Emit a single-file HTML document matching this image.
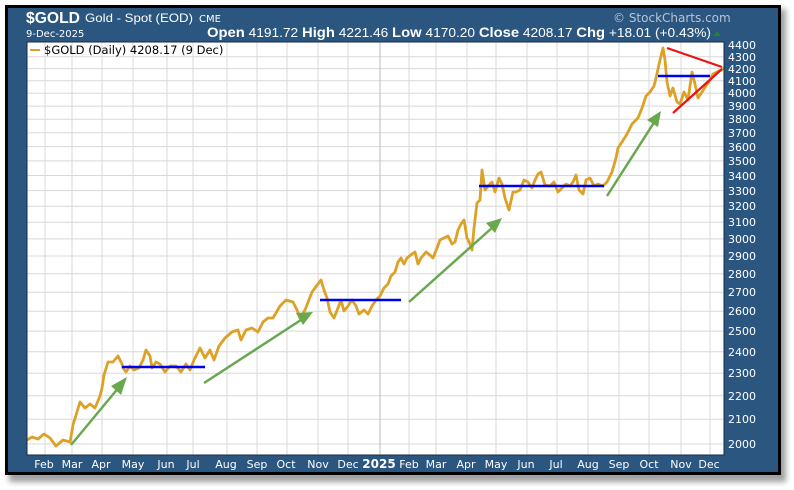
<!DOCTYPE html>
<html><head><meta charset="utf-8"><style>
html,body{margin:0;padding:0;background:#fff;width:794px;height:490px;overflow:hidden}
svg{display:block}
.dv{font-family:"DejaVu Sans","Liberation Sans",sans-serif}
.lb{font-family:"Liberation Sans",sans-serif}
</style></head><body>
<svg width="794" height="490" viewBox="0 0 794 490" xmlns="http://www.w3.org/2000/svg">
<defs><filter id="sh" x="-5%" y="-5%" width="110%" height="115%"><feGaussianBlur stdDeviation="3"/></filter></defs>
<rect x="9" y="9" width="777" height="473" fill="#777" filter="url(#sh)" opacity="0.7"/>
<rect x="5" y="5" width="776" height="470" fill="#000"/>
<rect x="8" y="8" width="770" height="464" fill="#2a5680"/>
<rect x="27" y="42" width="697" height="413" fill="#fff"/>
<g stroke="#d8d8d8" stroke-width="1">
<line x1="27" x2="724" y1="419.3" y2="419.3"/><line x1="27" x2="724" y1="395.8" y2="395.8"/><line x1="27" x2="724" y1="373.3" y2="373.3"/><line x1="27" x2="724" y1="351.8" y2="351.8"/><line x1="27" x2="724" y1="331.1" y2="331.1"/><line x1="27" x2="724" y1="311.3" y2="311.3"/><line x1="27" x2="724" y1="292.2" y2="292.2"/><line x1="27" x2="724" y1="273.8" y2="273.8"/><line x1="27" x2="724" y1="256" y2="256"/><line x1="27" x2="724" y1="238.9" y2="238.9"/><line x1="27" x2="724" y1="222.3" y2="222.3"/><line x1="27" x2="724" y1="206.2" y2="206.2"/><line x1="27" x2="724" y1="190.6" y2="190.6"/><line x1="27" x2="724" y1="175.5" y2="175.5"/><line x1="27" x2="724" y1="160.9" y2="160.9"/><line x1="27" x2="724" y1="146.6" y2="146.6"/><line x1="27" x2="724" y1="132.7" y2="132.7"/><line x1="27" x2="724" y1="119.3" y2="119.3"/><line x1="27" x2="724" y1="106.1" y2="106.1"/><line x1="27" x2="724" y1="93.3" y2="93.3"/><line x1="27" x2="724" y1="80.8" y2="80.8"/><line x1="27" x2="724" y1="68.6" y2="68.6"/><line x1="27" x2="724" y1="56.7" y2="56.7"/><line x1="27" x2="724" y1="444" y2="444"/>
<line y1="42" y2="455" x1="45" x2="45"/><line y1="42" y2="455" x1="72" x2="72"/><line y1="42" y2="455" x1="102" x2="102"/><line y1="42" y2="455" x1="133" x2="133"/><line y1="42" y2="455" x1="167" x2="167"/><line y1="42" y2="455" x1="193" x2="193"/><line y1="42" y2="455" x1="227" x2="227"/><line y1="42" y2="455" x1="257" x2="257"/><line y1="42" y2="455" x1="287" x2="287"/><line y1="42" y2="455" x1="318" x2="318"/><line y1="42" y2="455" x1="348" x2="348"/><line y1="42" y2="455" x1="380" x2="380" stroke="#bbb"/><line y1="42" y2="455" x1="409" x2="409"/><line y1="42" y2="455" x1="436" x2="436"/><line y1="42" y2="455" x1="467" x2="467"/><line y1="42" y2="455" x1="496" x2="496"/><line y1="42" y2="455" x1="527" x2="527"/><line y1="42" y2="455" x1="557" x2="557"/><line y1="42" y2="455" x1="588" x2="588"/><line y1="42" y2="455" x1="619" x2="619"/><line y1="42" y2="455" x1="649" x2="649"/><line y1="42" y2="455" x1="681" x2="681"/><line y1="42" y2="455" x1="710" x2="710"/>
</g>
<polyline fill="none" stroke="#dca126" stroke-width="2.8" stroke-linejoin="round" points="27,440 32,437 38,439 44,434 50,438 56,446 63,440 70,442 73,425 80,402 85,408 90,404 95,408 100,396 102,388 104,375 108,362 113,362 118,356 122,364 123,368 126,372 130,366 134,370 139,368 143,360 146,350 150,356 152,368 156,362 160,364 165,372 170,366 176,366 181,372 186,364 190,370 194,360 200,348 205,358 210,350 214,360 219,346 225,338 232,332 238,330 241,340 246,330 252,328 258,332 263,322 268,318 273,318 280,306 286,300 293,302 297,310 300,318 305,310 312,292 318,284 321,280 324,290 327,298 330,312 334,318 338,308 341,300 344,311 348,306 352,300 356,306 359,314 364,310 368,314 372,306 376,300 380,296 384,288 388,284 391,276 395,272 398,262 401,258 404,264 407,258 412,254 415,252 418,264 421,258 426,252 430,255 433,258 437,248 440,240 444,238 448,236 452,244 455,242 458,230 461,224 464,220 467,238 470,244 472,250 474,228 477,203 480,200 482,170 485,190 488,186 492,182 495,192 499,178 502,184 505,198 509,210 513,192 516,192 520,190 524,180 528,182 532,188 535,180 538,174 541,172 545,185 550,186 554,182 558,192 562,188 566,184 570,186 573,182 576,175 579,190 583,194 586,180 590,178 594,186 598,184 603,186 607,182 612,172 616,158 618,148 622,142 627,134 632,124 638,118 642,108 646,96 650,92 654,86 656,78 660,60 663,48 665,60 667,82 670,96 673,88 677,102 680,104 684,92 688,100 692,72 695,84 698,98 702,92 706,86 710,80 713,74 717,72 721,70 724,68"/>
<g stroke="#0000ee" stroke-width="2.5">
<line x1="122" y1="367" x2="205" y2="367"/><line x1="320" y1="300" x2="401" y2="300"/><line x1="479" y1="186" x2="604" y2="186"/><line x1="658" y1="76" x2="710" y2="76"/>
</g>
<g stroke="#6aa84f" stroke-width="2.5" fill="#6aa84f">
<line x1="71" y1="445" x2="120" y2="386"/><polygon points="127,377 111,386 121,395" stroke="none"/>
<line x1="204" y1="383" x2="304" y2="318"/><polygon points="313,312 296,313 303,325" stroke="none"/>
<line x1="409" y1="302" x2="493" y2="227"/><polygon points="502,218 486,223 495,233" stroke="none"/>
<line x1="607" y1="196" x2="655" y2="121"/><polygon points="661,111 647,120 658,127" stroke="none"/>
</g>
<g stroke="#ee1111" stroke-width="2.2"><line x1="667" y1="48" x2="722" y2="67"/><line x1="673" y1="113" x2="722" y2="69"/></g>
<rect x="27" y="42" width="697" height="413" fill="none" stroke="#1a2a4a" stroke-width="1"/>
<line x1="30" y1="50" x2="40" y2="50" stroke="#dca126" stroke-width="2"/>
<text class="dv" x="44" y="54" font-size="11.5" fill="#000">$GOLD (Daily) 4208.17 (9 Dec)</text>
<g fill="#fff">
<text class="lb" x="26" y="23" style="font-size:16px;font-weight:bold" textLength="54" lengthAdjust="spacingAndGlyphs">$GOLD</text>
<text class="lb" x="85" y="22" style="font-size:12px" textLength="108" lengthAdjust="spacingAndGlyphs">Gold - Spot (EOD)</text>
<text class="dv" x="199" y="22" style="font-size:10px">CME</text>
<text class="dv" x="26" y="37" style="font-size:10px">9-Dec-2025</text>
<text class="lb" x="207" y="37" style="font-size:12.5px" textLength="504" lengthAdjust="spacingAndGlyphs"><tspan style="font-weight:bold;font-size:13.5px">Open</tspan> 4191.72 <tspan style="font-weight:bold;font-size:13.5px">High</tspan> 4221.46 <tspan style="font-weight:bold;font-size:13.5px">Low</tspan> 4170.20 <tspan style="font-weight:bold;font-size:13.5px">Close</tspan> 4208.17 <tspan style="font-weight:bold;font-size:13.5px">Chg</tspan> +18.01 (+0.43%)</text>
</g>
<polygon points="713,36 721,36 717,31" fill="#2e7d32"/>
<text class="dv" x="613" y="22" style="font-size:12px" fill="#b8c4d4">© StockCharts.com</text>
<g class="dv" fill="#fff" font-size="11">
<text x="728" y="49">4400</text><text x="728" y="61">4300</text><text x="728" y="73">4200</text><text x="728" y="85">4100</text><text x="728" y="97">4000</text><text x="728" y="110">3900</text><text x="728" y="123">3800</text><text x="728" y="137">3700</text><text x="728" y="151">3600</text><text x="728" y="165">3500</text><text x="728" y="180">3400</text><text x="728" y="195">3300</text><text x="728" y="210">3200</text><text x="728" y="226">3100</text><text x="728" y="243">3000</text><text x="728" y="260">2900</text><text x="728" y="278">2800</text><text x="728" y="296">2700</text><text x="728" y="315">2600</text><text x="728" y="335">2500</text><text x="728" y="356">2400</text><text x="728" y="377">2300</text><text x="728" y="400">2200</text><text x="728" y="423">2100</text><text x="728" y="448">2000</text>
</g>
<g class="dv" fill="#fff" font-size="11" text-anchor="middle">
<text x="44" y="468">Feb</text><text x="72" y="468">Mar</text><text x="101" y="468">Apr</text><text x="133" y="468">May</text><text x="166" y="468">Jun</text><text x="193" y="468">Jul</text><text x="226" y="468">Aug</text><text x="257" y="468">Sep</text><text x="286" y="468">Oct</text><text x="318" y="468">Nov</text><text x="348" y="468">Dec</text><text x="379" y="468" font-weight="bold" font-size="12">2025</text><text x="409" y="468">Feb</text><text x="436" y="468">Mar</text><text x="466" y="468">Apr</text><text x="496" y="468">May</text><text x="526" y="468">Jun</text><text x="556" y="468">Jul</text><text x="588" y="468">Aug</text><text x="619" y="468">Sep</text><text x="649" y="468">Oct</text><text x="681" y="468">Nov</text><text x="709" y="468">Dec</text>
</g>
</svg>
</body></html>
